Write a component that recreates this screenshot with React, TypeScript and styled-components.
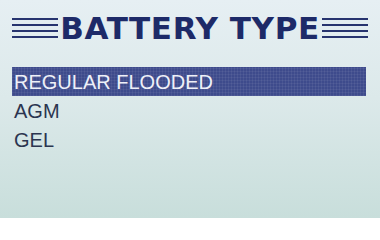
import styled, { createGlobalStyle } from "styled-components";

const GlobalStyle = createGlobalStyle`
  html, body {
    margin: 0;
    padding: 0;
  }
  body {
    width: 380px;
    height: 218px;
    overflow: hidden;
  }
`;

const Screen = styled.div`
  width: 380px;
  height: 218px;
  box-sizing: border-box;
  padding: 13px 12px 0 12px;
  background: linear-gradient(180deg, #e6eff3 0%, #dce9ea 45%, #c8dedb 100%);
  display: flex;
  flex-direction: column;
`;

const TitleRow = styled.div`
  display: flex;
  align-items: center;
  justify-content: space-between;
  height: 30px;
`;

const Lines = styled.div`
  width: 46px;
  height: 21px;
  display: flex;
  flex-direction: column;
  justify-content: space-between;
`;

const Line = styled.div`
  height: 2.5px;
  background: #27346f;
`;

const Title = styled.h1`
  margin: 0;
  font-family: "DejaVu Sans", sans-serif;
  font-weight: bold;
  font-size: 31px;
  line-height: 30px;
  color: #1d2a68;
  letter-spacing: 0.6px;
`;

const Menu = styled.ul`
  list-style: none;
  margin: 24px 0 0 0;
  padding: 0;
  display: flex;
  flex-direction: column;
`;

const Item = styled.li<{ $selected?: boolean }>`
  height: 29px;
  box-sizing: border-box;
  padding: 1px 0 0 2px;
  font-family: "Liberation Sans", Arial, sans-serif;
  font-size: 20px;
  line-height: 29px;
  color: ${(p) => (p.$selected ? "#eef0f8" : "#2b3550")};
  background: ${(p) =>
    p.$selected
      ? `repeating-linear-gradient(90deg, rgba(255,255,255,0.06) 0 1px, transparent 1px 3px),
         repeating-linear-gradient(0deg, rgba(255,255,255,0.05) 0 1px, transparent 1px 3px),
         #3e4b8c`
      : "transparent"};
  width: ${(p) => (p.$selected ? "354px" : "auto")};
`;

const LinesBlock = () => (
  <Lines>
    <Line />
    <Line />
    <Line />
    <Line />
  </Lines>
);

const types = ["REGULAR FLOODED", "AGM", "GEL"];

export default function App() {
  return (
    <>
      <GlobalStyle />
      <Screen>
        <TitleRow>
          <LinesBlock />
          <Title>BATTERY TYPE</Title>
          <LinesBlock />
        </TitleRow>
        <Menu>
          {types.map((t, i) => (
            <Item key={t} $selected={i === 0}>
              {t}
            </Item>
          ))}
        </Menu>
      </Screen>
    </>
  );
}
